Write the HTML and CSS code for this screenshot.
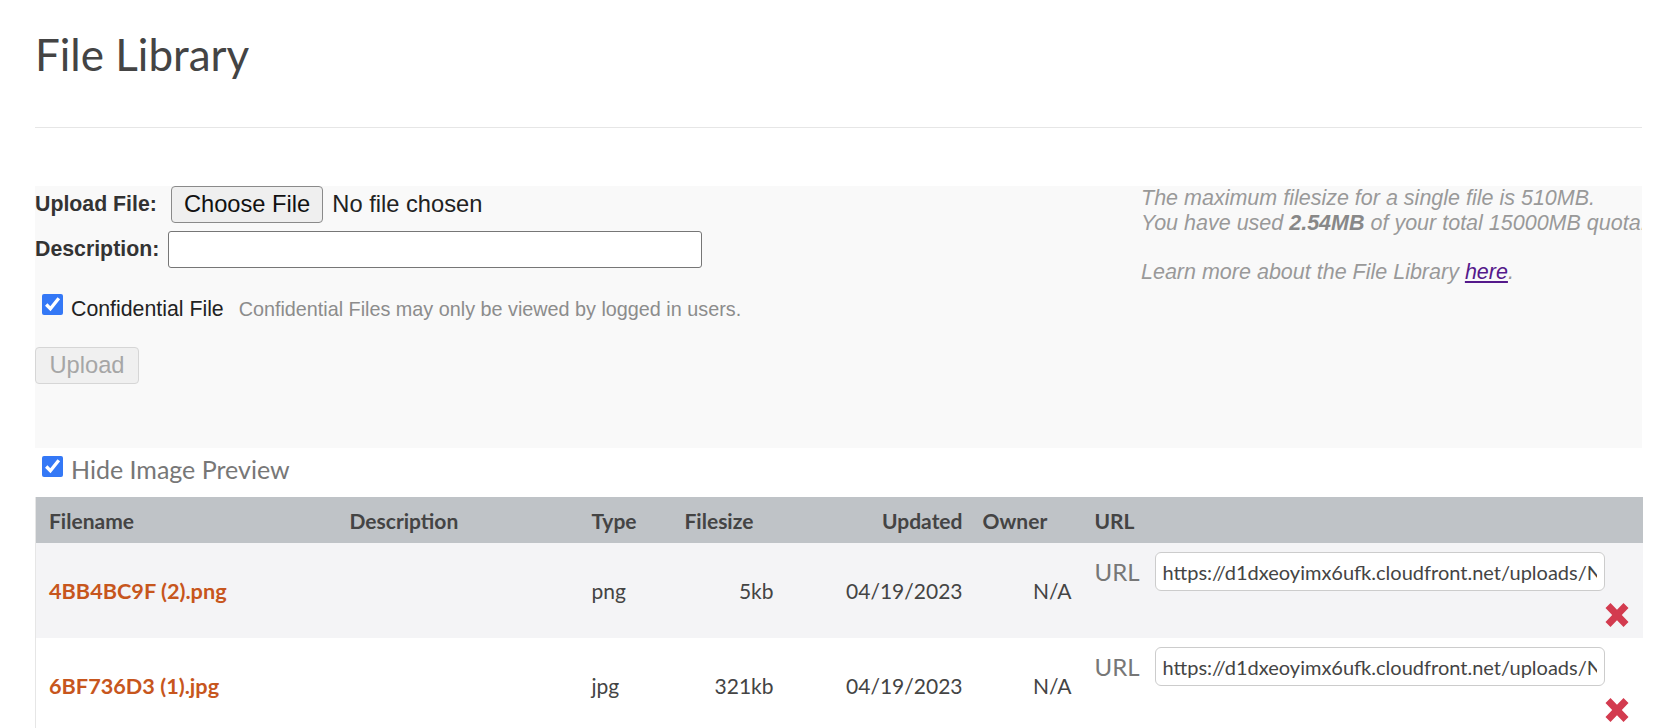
FILE: index.html
```html
<!DOCTYPE html>
<html lang="en">
<head>
  <meta charset="UTF-8">
  <meta name="viewport" content="width=device-width, initial-scale=1.0">
  <title>File Library</title>
  <link rel="stylesheet" href="styles.css">
</head>
<body>
  <div class="page">
    <h1>File Library</h1>
    <hr>

    <!-- Upload form -->
    <form class="upload-panel">
      <div class="upload-form">
        <div class="field-row">
          <label class="field-label file-label" for="file">Upload File:</label>
          <input type="file" id="file" class="file-input">
        </div>
        <div class="field-row desc-row">
          <label class="field-label desc-label" for="description">Description:</label>
          <input type="text" id="description" class="desc-input">
        </div>
        <div class="confidential-row">
          <input type="checkbox" id="confidential" class="check" checked>
          <span class="conf-text"><label for="confidential">Confidential File</label> <span class="hint">Confidential Files may only be viewed by logged in users.</span></span>
        </div>
        <button type="submit" class="upload-btn" disabled>Upload</button>
      </div>
      <div class="quota-info">
        <p>The maximum filesize for a single file is 510MB.<br>You have used <b>2.54MB</b> of your total 15000MB quota.</p>
        <p>Learn more about the File Library <a href="#">here</a>.</p>
      </div>
    </form>

    <div class="preview-toggle">
      <input type="checkbox" id="hidePreview" class="check" checked>
      <label for="hidePreview">Hide Image Preview</label>
    </div>

    <!-- File list -->
    <table class="file-table">
      <colgroup>
        <col class="c-name"><col class="c-desc"><col class="c-type"><col class="c-size"><col class="c-updated"><col class="c-owner"><col class="c-url">
      </colgroup>
      <thead>
        <tr>
          <th class="name">Filename</th>
          <th>Description</th>
          <th>Type</th>
          <th>Filesize</th>
          <th class="updated">Updated</th>
          <th>Owner</th>
          <th class="url">URL</th>
        </tr>
      </thead>
      <tbody>
        <tr>
          <td class="name"><a href="#">4BB4BC9F (2).png</a></td>
          <td></td>
          <td>png</td>
          <td class="size">5kb</td>
          <td class="updated">04/19/2023</td>
          <td class="owner">N/A</td>
          <td class="url">
            <div class="url-line">
              <span class="url-label">URL</span>
              <input type="text" class="url-input" value="https://d1dxeoyimx6ufk.cloudfront.net/uploads/NjQ0MDNlNmU4YjVhZi80QkI0QkM5RiAoMikucG5n" readonly>
            </div>
            <div class="delete-line">
              <a href="#" class="delete" title="Delete"><svg width="24" height="26" viewBox="0 0 24 26"><path d="M5.5 1 L12 7.8 L18.5 1 L23.5 6 L16.8 13 L23.5 20 L18.5 25 L12 18.2 L5.5 25 L0.5 20 L7.2 13 L0.5 6 Z"/></svg></a>
            </div>
          </td>
        </tr>
        <tr>
          <td class="name"><a href="#">6BF736D3 (1).jpg</a></td>
          <td></td>
          <td>jpg</td>
          <td class="size">321kb</td>
          <td class="updated">04/19/2023</td>
          <td class="owner">N/A</td>
          <td class="url">
            <div class="url-line">
              <span class="url-label">URL</span>
              <input type="text" class="url-input" value="https://d1dxeoyimx6ufk.cloudfront.net/uploads/NjQ0MDNlNmU4YjVhZi82QkY3MzZEMyAoMSkuanBn" readonly>
            </div>
            <div class="delete-line">
              <a href="#" class="delete" title="Delete"><svg width="24" height="26" viewBox="0 0 24 26"><path d="M5.5 1 L12 7.8 L18.5 1 L23.5 6 L16.8 13 L23.5 20 L18.5 25 L12 18.2 L5.5 25 L0.5 20 L7.2 13 L0.5 6 Z"/></svg></a>
            </div>
          </td>
        </tr>
      </tbody>
    </table>
  </div>
</body>
</html>
```

FILE: styles.css
```css
body {
  margin: 0;
  padding: 0;
  background: #fff;
  color: #444;
  font-family: Lato, "Open Sans", sans-serif;
}
.page {
  width: 1607px;
  margin-left: 35px;
}
h1 {
  margin: 26px 0 0;
  font-size: 44px;
  line-height: 56px;
  font-weight: 400;
  color: #444;
}
hr {
  margin: 45px 0 0;
  border: 0;
  border-top: 1px solid #e6e6e6;
  height: 0;
}

/* upload panel */
.upload-panel {
  margin-top: 58px;
  display: flex;
  justify-content: space-between;
  background: #f9f9f9;
  padding-bottom: 64px;
  overflow: hidden;
  font-family: "Liberation Sans", Arial, sans-serif;
}
.field-row {
  display: flex;
  align-items: center;
  height: 37px;
}
.desc-row {
  margin-top: 8px;
}
.field-label {
  font-weight: bold;
  font-size: 21.3px;
  color: #333;
}
.file-label {
  margin-right: 14px;
}
.desc-label {
  margin-right: 9px;
}
.file-input {
  font-family: "Liberation Sans", Arial, sans-serif;
  font-size: 23.7px;
  color: #222;
  height: 37px;
  width: 340px;
}
.file-input::file-selector-button {
  height: 37px;
  padding: 0 12px;
  margin: 0 9px 0 0;
  font-family: "Liberation Sans", Arial, sans-serif;
  font-size: 23.7px;
  color: #111;
  background: #efefef;
  border: 1px solid #8a8a8a;
  border-radius: 4px;
}
.desc-input {
  box-sizing: border-box;
  width: 534px;
  height: 37px;
  margin: 0;
  border: 1px solid #767676;
  border-radius: 3px;
  background: #fff;
}
.confidential-row {
  margin-top: 26px;
  display: flex;
  align-items: center;
}
.check {
  width: 21px;
  height: 21px;
  margin: 0 8px 0 7px;
  accent-color: #3478f6;
}
.confidential-row .check {
  margin-bottom: 10px;
}
.conf-text {
  line-height: 25px;
  font-size: 21.3px;
  color: #222;
}
.hint {
  margin-left: 9px;
  font-size: 19.8px;
  color: #8c8c8c;
}
.upload-btn {
  margin-top: 22px;
  width: 104px;
  height: 37px;
  padding: 0;
  font-family: "Liberation Sans", Arial, sans-serif;
  font-size: 23.7px;
  color: #a6a6a6;
  background: #f0f0f0;
  border: 1px solid #d6d6d6;
  border-radius: 4px;
}
.quota-info {
  width: 501px;
  flex-shrink: 0;
  white-space: nowrap;
  overflow: hidden;
  font-size: 21.5px;
  line-height: 24.5px;
  font-style: italic;
  color: #999;
}
.quota-info p {
  margin: 0 0 24.5px;
}
.quota-info b {
  color: #888;
}
.quota-info a {
  color: #551a8b;
}

/* hide preview toggle */
.preview-toggle {
  display: flex;
  align-items: center;
  margin: 7px 0 13px;
  font-size: 25px;
  line-height: 29px;
  color: #777;
}
.preview-toggle .check {
  margin-bottom: 6px;
}

/* table */
.file-table {
  width: 1607px;
  table-layout: fixed;
  border-collapse: collapse;
  font-size: 21px;
  color: #444;
  border-left: 1px solid #e6e6e6;
}
.c-name { width: 307px; }
.c-desc { width: 242px; }
.c-type { width: 93px; }
.c-size { width: 103px; }
.c-updated { width: 195px; }
.c-owner { width: 112px; }
.c-url { width: 555px; }
.file-table thead tr {
  height: 46px;
}
.file-table tbody tr {
  height: 95px;
}
.file-table th {
  padding: 0 7px;
  background: #bfc3c7;
  text-align: left;
  font-weight: bold;
  color: #444;
}
.file-table td {
  padding: 0 7px;
  vertical-align: middle;
}
.file-table tbody tr:nth-child(odd) {
  background: #f4f4f6;
}
.file-table .name {
  padding-left: 13px;
}
.file-table .name a {
  color: #c7561d;
  font-size: 21.7px;
  font-weight: bold;
  text-decoration: none;
}
.file-table .size {
  text-align: right;
}
.file-table .updated {
  text-align: right;
  padding-right: 13px;
}
.file-table .owner {
  text-align: right;
  padding-right: 16px;
}
.file-table td.url {
  padding: 9px 14px 10px 7px;
  vertical-align: top;
}
.url-line {
  display: flex;
  align-items: center;
}
.url-label {
  font-size: 24px;
  color: #777;
  margin-right: 15px;
}
.url-input {
  box-sizing: border-box;
  width: 450px;
  height: 39px;
  padding: 0 7px;
  border: 1px solid #ccc;
  border-radius: 6px;
  background: #fff;
  font-family: Lato, sans-serif;
  font-size: 20px;
  color: #444;
}
.delete-line {
  margin-top: 11px;
  display: flex;
  justify-content: flex-end;
}
.delete svg {
  display: block;
  fill: #d33b4f;
}
```
